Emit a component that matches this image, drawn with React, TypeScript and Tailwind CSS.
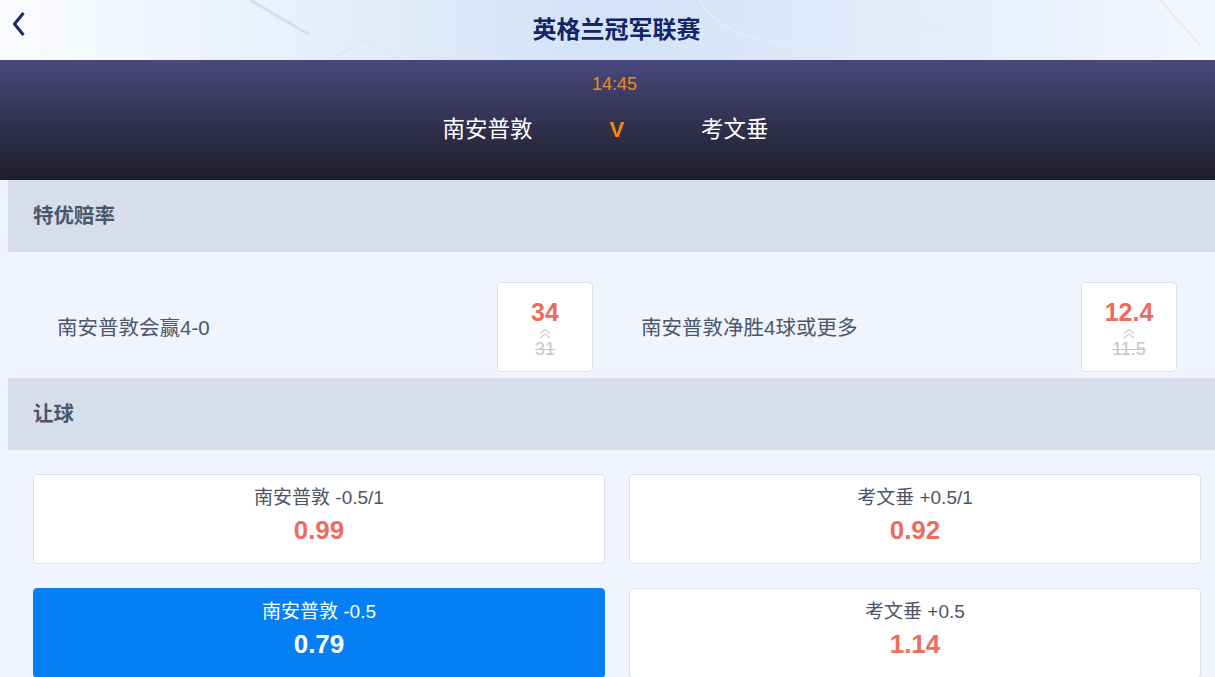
import React from "react";

const cjk = { fontFamily: '"Liberation Sans", "Noto Sans CJK SC", sans-serif' };

function OddsBox({ value, old }: { value: string; old: string }) {
  return (
    <div className="flex h-[90px] w-[96px] shrink-0 flex-col items-center rounded-[4px] border border-[#d9dfee] bg-white pt-[15px]">
      <span className="text-[25px] font-bold leading-[28px] text-[#ee6b5d]">{value}</span>
      <svg width="14" height="11" viewBox="0 0 14 11" className="mt-[2px]">
        <path d="M2 5.5 L7 1.5 L12 5.5 M2 10 L7 6 L12 10" fill="none" stroke="#c9ccd3" strokeWidth="1.2" />
      </svg>
      <span className="text-[18px] leading-[20px] text-[#c3c6cd] line-through">{old}</span>
    </div>
  );
}

function SpecialRow({ label, value, old }: { label: string; value: string; old: string }) {
  return (
    <div className="flex items-center justify-between pl-6 pr-[18px]">
      <span className="pt-[3px] text-[20.5px] text-[#4d586b]">{label}</span>
      <OddsBox value={value} old={old} />
    </div>
  );
}

function HandicapCard({ label, value, active }: { label: string; value: string; active?: boolean }) {
  return (
    <div
      className={
        active
          ? "flex h-[90px] flex-col items-center rounded-[4px] border border-[#0a80f5] bg-[#047ff6] pt-[11px]"
          : "flex h-[90px] flex-col items-center rounded-[4px] border border-[#d8dff0] bg-white pt-[11px]"
      }
    >
      <span className={active ? "text-[19px] leading-[24px] text-white" : "text-[19px] leading-[24px] text-[#4b5567]"}>
        {label}
      </span>
      <span
        className={
          active
            ? "mt-[5px] text-[26px] font-bold leading-[30px] text-white"
            : "mt-[5px] text-[26px] font-bold leading-[30px] text-[#ee6b5d]"
        }
      >
        {value}
      </span>
    </div>
  );
}

function SectionHeader({ title }: { title: string }) {
  return (
    <div className="ml-2 flex h-[72px] items-center bg-[#d6ddeb] pl-[25px]">
      <span className="text-[20.5px] font-bold text-[#4a576b]">{title}</span>
    </div>
  );
}

export default function App() {
  return (
    <div className="h-[677px] w-[1215px] overflow-hidden bg-[#eff4fe]" style={cjk}>
      {/* top bar */}
      <header className="relative flex h-[60px] items-center justify-center overflow-hidden bg-gradient-to-r from-[#fbfcff] via-[#d3e2f6] to-[#f4f7fe] pl-[18px]">
        <svg className="absolute left-0 top-0" width="1215" height="60" viewBox="0 0 1215 60">
          <path d="M700 0 C720 40 800 60 900 30" fill="none" stroke="#e2ebf9" strokeWidth="2" />
          <path d="M840 0 C880 20 950 40 990 10" fill="none" stroke="#e1ebf9" strokeWidth="2" />
          <path d="M330 60 L365 40 L400 60" fill="none" stroke="#dde8f7" strokeWidth="2" />
          <path d="M250 0 L310 35" fill="none" stroke="#d3deef" strokeWidth="3" />
          <path d="M1160 0 L1200 45" fill="none" stroke="#e2ebf8" strokeWidth="2" />
        </svg>
        <svg className="absolute left-[11px] top-[12px]" width="16" height="24" viewBox="0 0 16 24">
          <path d="M12.5 1 L3.5 12 L12.5 23" fill="none" stroke="#1b2a66" strokeWidth="3" strokeLinejoin="round" />
        </svg>
        <h1 className="relative text-[24px] font-bold text-[#132469]">英格兰冠军联赛</h1>
      </header>

      {/* match banner */}
      <section className="flex h-[120px] flex-col items-center bg-gradient-to-b from-[#49487e] to-[#1e1e2b] pt-[12px]">
        <span className="pl-[14px] text-[18px] leading-[24px] text-[#f08a12]">14:45</span>
        <div className="mt-[17px] flex items-center gap-[77px] pr-[4px]">
          <span className="text-[22.5px] text-white">南安普敦</span>
          <span className="text-[22px] font-bold text-[#f58a0a]">V</span>
          <span className="text-[22.5px] text-white">考文垂</span>
        </div>
      </section>

      <SectionHeader title="特优赔率" />
      <div className="grid grid-cols-2 gap-[6px] pb-[6px] pl-[33px] pr-[20px] pt-[30px]">
        <SpecialRow label="南安普敦会赢4-0" value="34" old="31" />
        <SpecialRow label="南安普敦净胜4球或更多" value="12.4" old="11.5" />
      </div>

      <SectionHeader title="让球" />
      <div className="grid grid-cols-2 gap-6 pl-[33px] pr-[14px] pt-6">
        <HandicapCard label="南安普敦 -0.5/1" value="0.99" />
        <HandicapCard label="考文垂 +0.5/1" value="0.92" />
        <HandicapCard label="南安普敦 -0.5" value="0.79" active />
        <HandicapCard label="考文垂 +0.5" value="1.14" />
      </div>
    </div>
  );
}
